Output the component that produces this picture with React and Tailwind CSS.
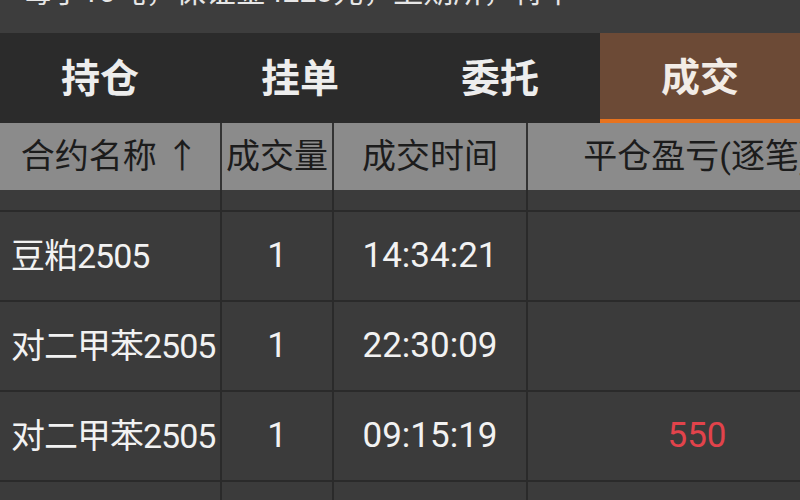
const tabs = ['持仓', '挂单', '委托', '成交'];

const trades = [
  { name: '豆粕2505', qty: '1', time: '14:34:21', pnl: '' },
  { name: '对二甲苯2505', qty: '1', time: '22:30:09', pnl: '' },
  { name: '对二甲苯2505', qty: '1', time: '09:15:19', pnl: '550' },
  { name: '', qty: '', time: '', pnl: '' },
];

const font = { fontFamily: "Roboto, 'Noto Sans CJK SC', sans-serif" };

export default function App() {
  return (
    <div className="h-[500px] w-[800px] overflow-hidden bg-[#3b3b3b]" style={font}>
      {/* info line, mostly scrolled out of view */}
      <div className="h-[33px] overflow-hidden bg-[#3d3d3d]">
        <div className="-mt-[26px] whitespace-nowrap pl-[22px] text-[30px] leading-[36px] text-[#e6e6e6]">
          每手10吨，保证金4223元，上期所，特单
        </div>
      </div>

      {/* tabs */}
      <div className="flex h-[90px] bg-[#2b2b2b]">
        {tabs.map((t, i) => (
          <div
            key={t}
            className={
              i === 3
                ? 'flex w-[200px] items-center justify-center border-b-[4px] border-[#e8731e] bg-[#6c4a36] pt-[4px] text-[39px] font-bold text-[#f2ece6]'
                : 'flex w-[200px] items-center justify-center pt-[2px] text-[39px] font-bold text-[#ededed]'
            }
          >
            {t}
          </div>
        ))}
      </div>

      {/* table */}
      <div className="w-[866px]">
        <div className="flex h-[67px] bg-[#8b8b8b] text-[34px] text-[#1c1c1c]">
          <div className="flex w-[222px] items-center justify-center border-r-2 border-[#333]">合约名称 ↑</div>
          <div className="flex w-[112px] items-center justify-center whitespace-nowrap border-r-2 border-[#333]">成交量</div>
          <div className="flex w-[194px] items-center justify-center border-r-2 border-[#333]">成交时间</div>
          <div className="flex w-[338px] items-center justify-center whitespace-nowrap">平仓盈亏(逐笔)</div>
        </div>

        <div className="flex h-[22px] border-b-2 border-[#2a2a2a]">
          <div className="w-[222px] border-r-2 border-[#2a2a2a]" />
          <div className="w-[112px] border-r-2 border-[#2a2a2a]" />
          <div className="w-[194px] border-r-2 border-[#2a2a2a]" />
          <div className="w-[338px]" />
        </div>

        {trades.map((r, i) => (
          <div key={i} className="flex h-[90px] border-b-2 border-[#2a2a2a] text-[35px] text-[#f2f2f2]">
            <div className="flex w-[222px] items-center whitespace-nowrap border-r-2 border-[#2a2a2a] pl-[11px] text-[34px] tracking-[-1px]">{r.name}</div>
            <div className="flex w-[112px] items-center justify-center border-r-2 border-[#2a2a2a]">{r.qty}</div>
            <div className="flex w-[194px] items-center justify-center border-r-2 border-[#2a2a2a]">{r.time}</div>
            <div className="flex w-[338px] items-center justify-center text-[#e2434b]">{r.pnl}</div>
          </div>
        ))}
      </div>
    </div>
  );
}
